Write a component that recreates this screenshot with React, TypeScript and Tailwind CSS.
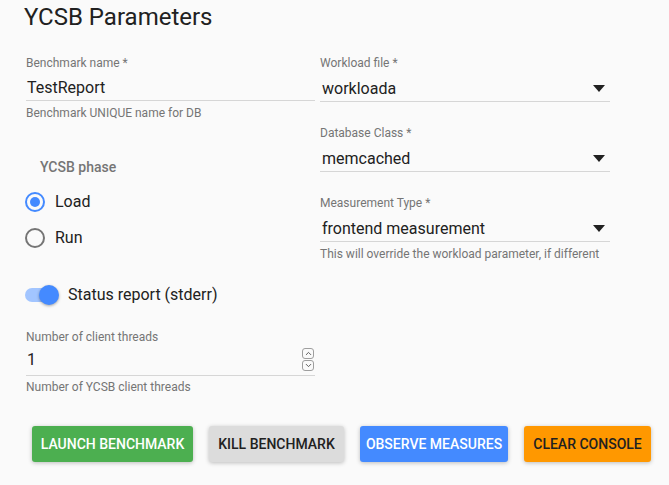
import { ChevronDown, ChevronUp } from "lucide-react"

function Label({ children }: { children: React.ReactNode }) {
  return <div className="text-[12px] leading-[14px] text-[#757575]">{children}</div>
}

function Helper({ children, className = "mt-[5px]" }: { children: React.ReactNode; className?: string }) {
  return <div className={`text-[12px] leading-[14px] text-[#757575] ${className}`}>{children}</div>
}

function SelectField({ label, value }: { label: string; value: string }) {
  return (
    <div>
      <Label>{label}</Label>
      <div className="flex items-end justify-between h-[32px] border-b border-[#d6d6d6] pl-[2px] pr-[5px] pb-[3px]">
        <span className="text-[16px] leading-[19px] text-[#212121]">{value}</span>
        <svg width="12" height="7" viewBox="0 0 12 7" className="mb-[6px]">
          <path d="M0 0h12L6 7z" fill="#212121" />
        </svg>
      </div>
    </div>
  )
}

function Radio({ checked, label }: { checked: boolean; label: string }) {
  return (
    <div className="flex items-center h-[20px]">
      <div
        className={`w-[20px] h-[20px] rounded-full border-2 flex items-center justify-center ${
          checked ? "border-[#448aff]" : "border-[#757575]"
        }`}
      >
        {checked && <div className="w-[10px] h-[10px] rounded-full bg-[#448aff]" />}
      </div>
      <span className="ml-[10px] text-[16px] text-[#212121]">{label}</span>
    </div>
  )
}

export default function App() {
  const buttons = [
    { label: "LAUNCH BENCHMARK", cls: "bg-[#4caf50] text-white w-[161px]" },
    { label: "KILL BENCHMARK", cls: "bg-[#dcdcdc] text-[#212121] w-[135px]" },
    { label: "OBSERVE MEASURES", cls: "bg-[#448aff] text-white w-[148px]" },
    { label: "CLEAR CONSOLE", cls: "bg-[#ff9800] text-[#212121] w-[127px]" },
  ]

  return (
    <div className="min-h-screen w-[669px] h-[485px] bg-[#fafafa] font-['Roboto',sans-serif] overflow-hidden">
      <h1 className="pl-[24px] pt-[1px] text-[24px] leading-[32px] text-[#212121]">YCSB Parameters</h1>

      <div className="flex pl-[26px] mt-[23px]">
        {/* Left column */}
        <div className="w-[289px]">
          <Label>Benchmark name *</Label>
          <div className="h-[31px] border-b border-[#d6d6d6] flex items-end pb-[3px] pl-[1px]">
            <span className="text-[16px] leading-[19px] text-[#212121]">TestReport</span>
          </div>
          <Helper>Benchmark UNIQUE name for DB</Helper>

          <div className="mt-[39px] pl-[14px] text-[14px] leading-[16px] font-medium text-[#757575]">YCSB phase</div>

          <div className="mt-[17px] -ml-[1px]">
            <Radio checked label="Load" />
          </div>
          <div className="mt-[16px] -ml-[1px]">
            <Radio checked={false} label="Run" />
          </div>

          <div className="mt-[37px] flex items-center h-[20px] -ml-[1px]">
            <div className="relative w-[32px] h-[20px] flex items-center">
              <div className="w-[30px] h-[14px] rounded-full bg-[#a2c5ff]" />
              <div className="absolute left-[14px] top-0 w-[20px] h-[20px] rounded-full bg-[#448aff] shadow-[0_1px_3px_rgba(0,0,0,0.35)]" />
            </div>
            <span className="ml-[11px] text-[16px] text-[#212121]">Status report (stderr)</span>
          </div>

          <div className="mt-[25px]">
            <Label>Number of client threads</Label>
            <div className="h-[32px] border-b border-[#d6d6d6] flex items-center justify-between pl-[1px] pr-[1px]">
              <span className="text-[16px] leading-[19px] text-[#212121]">1</span>
              <div className="flex flex-col gap-[1px]">
                <div className="w-[12px] h-[11px] border border-[#9e9e9e] rounded-[3px] flex items-center justify-center">
                  <ChevronUp size={9} strokeWidth={2.5} color="#555" />
                </div>
                <div className="w-[12px] h-[11px] border border-[#9e9e9e] rounded-[3px] flex items-center justify-center">
                  <ChevronDown size={9} strokeWidth={2.5} color="#555" />
                </div>
              </div>
            </div>
            <Helper className="mt-[4px]">Number of YCSB client threads</Helper>
          </div>
        </div>

        {/* Right column */}
        <div className="w-[290px] ml-[5px]">
          <SelectField label="Workload file *" value="workloada" />
          <div className="mt-[24px]">
            <SelectField label="Database Class *" value="memcached" />
          </div>
          <div className="mt-[24px]">
            <SelectField label="Measurement Type *" value="frontend measurement" />
          </div>
          <Helper className="mt-[5px]">This will override the workload parameter, if different</Helper>
        </div>
      </div>

      <div className="flex gap-[16px] pl-[32px] mt-[32px]">
        {buttons.map((b) => (
          <button
            key={b.label}
            className={`h-[36px] rounded-[3px] text-[14px] font-medium shadow-[0_1px_4px_rgba(0,0,0,0.25)] ${b.cls}`}
          >
            {b.label}
          </button>
        ))}
      </div>
    </div>
  )
}
